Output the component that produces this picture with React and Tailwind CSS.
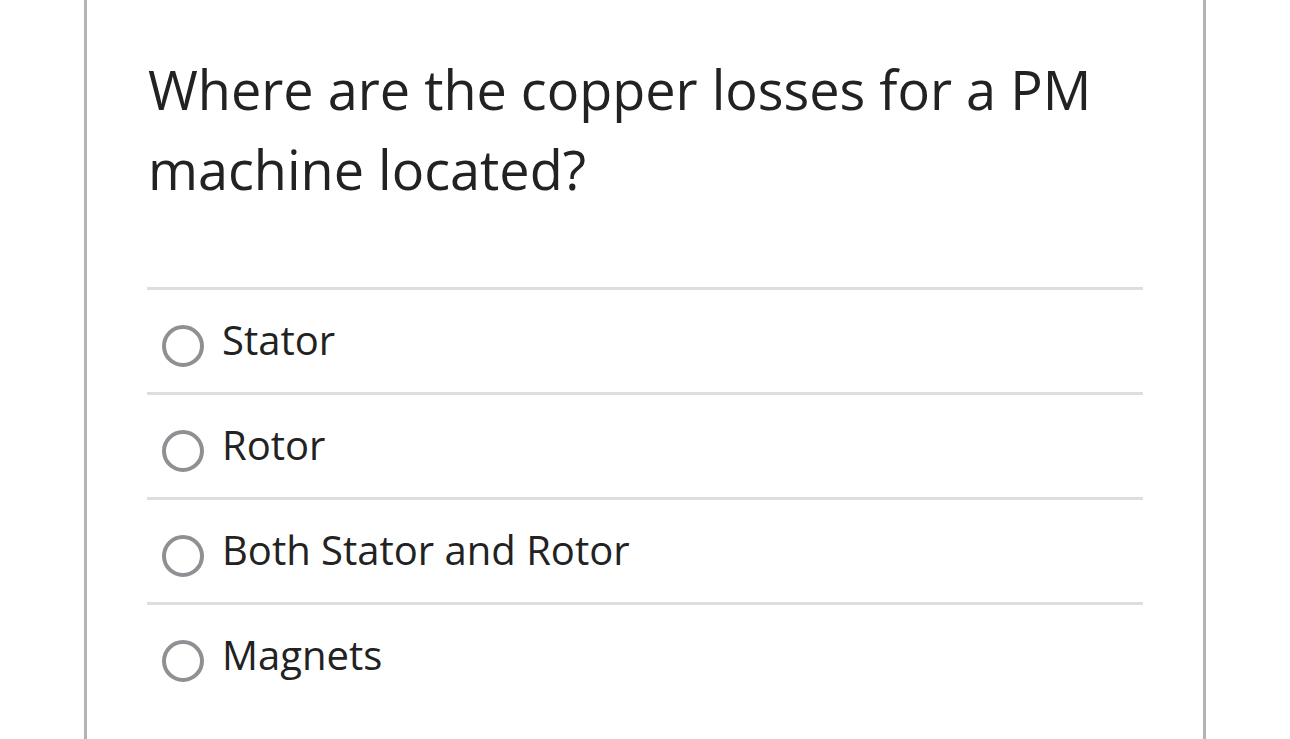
import React, { useState } from 'react';

const options = ['Stator', 'Rotor', 'Both Stator and Rotor', 'Magnets'];

const App = () => {
  const [selected, setSelected] = useState(null);

  return (
    <div className="min-h-screen bg-white" style={{ fontFamily: '"Open Sans", Lato, sans-serif' }}>
      <div className="ml-[84px] w-[1122px] h-[739px] border-x-[3px] border-[#b3b3b3] px-[60px] pt-[49px] overflow-hidden">
        <h1 className="text-[54px] leading-[80px] text-[#222] font-normal pl-px">
          Where are the copper losses for a PM machine located?
        </h1>

        <div className="mt-[78px]">
          {options.map((opt, i) => (
            <label
              key={opt}
              className="flex items-center h-[105px] pt-[10px] border-t-[3px] border-[#dedede] cursor-pointer"
              onClick={() => setSelected(i)}
            >
              <span className="ml-[15px] w-[42px] h-[42px] shrink-0 rounded-full border-[4px] border-[#909094] flex items-center justify-center">
                {selected === i && <span className="w-[20px] h-[20px] rounded-full bg-[#909094]" />}
              </span>
              <span className="ml-[18px] mb-[12px] text-[40px] leading-[60px] text-[#222]">{opt}</span>
            </label>
          ))}
        </div>
      </div>
    </div>
  );
};

export default App;
